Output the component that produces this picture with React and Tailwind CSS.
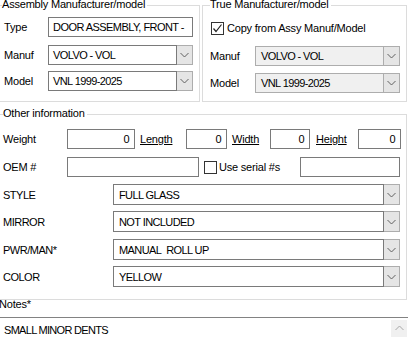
import React from "react";

function Chevron({ up = false, color = "#606060" }) {
  return (
    <svg width="9" height="6" viewBox="0 0 9 6" className="block">
      {up ? (
        <path d="M0.5 5 L4.5 1 L8.5 5" fill="none" stroke={color} strokeWidth="1" />
      ) : (
        <path d="M0.5 1 L4.5 5 L8.5 1" fill="none" stroke={color} strokeWidth="1" />
      )}
    </svg>
  );
}

function Combo({ value, w, h = "h-[20px]", disabled = false, pl = "pl-[4px]" }) {
  return (
    <div className={`flex ${w} ${h}`}>
      <div
        className={`flex-1 flex items-center ${pl} border ${
          disabled ? "border-[#adadad] bg-[#f0f0f0]" : "border-[#7a7a7a] bg-white"
        } whitespace-nowrap overflow-hidden tracking-[-0.6px]`}
      >
        {value}
      </div>
      <div className="w-[16px] flex items-center justify-center border border-l-0 border-[#adadad] bg-[#e5e5e5]">
        <Chevron />
      </div>
    </div>
  );
}

function TextBox({ value = "", w, right = false }) {
  return (
    <div
      className={`${w} h-[20px] flex items-center border border-[#7a7a7a] bg-white whitespace-nowrap overflow-hidden tracking-[-0.55px] ${
        right ? "justify-end pr-[5px]" : "pl-[4px]"
      }`}
    >
      {value}
    </div>
  );
}

function CheckBox({ checked }) {
  return (
    <div className="w-[13px] h-[13px] border border-[#333333] bg-white flex items-center justify-center shrink-0">
      {checked && (
        <svg width="11" height="11" viewBox="0 0 11 11" className="block">
          <path d="M1.5 5.5 L4 8.5 L9.5 1.5" fill="none" stroke="#222" strokeWidth="1.2" />
        </svg>
      )}
    </div>
  );
}

export default function App() {
  return (
    <div className="w-[408px] h-[337px] overflow-hidden bg-white text-[11px] leading-[14px] tracking-[-0.2px] text-black font-['Liberation_Sans',Arial,sans-serif] flex flex-col">
      {/* top row */}
      <div className="flex pt-[5px]">
        {/* Assembly group */}
        <div className="-ml-px w-[201px] h-[97px] border border-[#dcdcdc] flex flex-col">
          <div className="-mt-[9px] ml-[2px] w-fit bg-white pr-[2px]">Assembly Manufacturer/model</div>
          <div className="mt-[6px] flex items-center">
            <div className="w-[48px] pl-[4px]">Type</div>
            <TextBox value="DOOR ASSEMBLY, FRONT -" w="w-[145px]" />
          </div>
          <div className="mt-[8px] flex items-center">
            <div className="w-[48px] pl-[4px]">Manuf</div>
            <Combo value="VOLVO - VOL" w="w-[145px]" />
          </div>
          <div className="mt-[6px] flex items-center">
            <div className="w-[48px] pl-[4px]">Model</div>
            <Combo value="VNL 1999-2025" w="w-[145px]" />
          </div>
        </div>
        {/* True group */}
        <div className="ml-[2px] w-[205px] h-[97px] border border-[#dcdcdc] flex flex-col">
          <div className="-mt-[9px] ml-[7px] w-fit bg-white pr-[2px]">True Manufacturer/model</div>
          <div className="mt-[10px] ml-[8px] flex items-center">
            <CheckBox checked />
            <div className="ml-[3px]">Copy from Assy Manuf/Model</div>
          </div>
          <div className="mt-[11px] flex items-center">
            <div className="w-[52px] pl-[7px]">Manuf</div>
            <Combo value="VOLVO - VOL" w="w-[145px]" disabled pl="pl-[5px]" />
          </div>
          <div className="mt-[7px] flex items-center">
            <div className="w-[52px] pl-[7px]">Model</div>
            <Combo value="VNL 1999-2025" w="w-[145px]" disabled pl="pl-[5px]" />
          </div>
        </div>
      </div>

      {/* Other information */}
      <div className="mt-[12px] -ml-px w-[408px] h-[186px] border border-[#dcdcdc] flex flex-col">
        <div className="-mt-[9px] ml-[3px] w-fit bg-white pr-[2px]">Other information</div>
        <div className="mt-[9px] flex items-center">
          <div className="w-[67px] pl-[3px]">Weight</div>
          <TextBox value="0" w="w-[68px]" right />
          <div className="ml-[5px] w-[46px] underline">Length</div>
          <TextBox value="0" w="w-[41px]" right />
          <div className="ml-[5px] w-[38px] underline">Width</div>
          <TextBox value="0" w="w-[40px]" right />
          <div className="ml-[6px] w-[42px] underline">Height</div>
          <TextBox value="0" w="w-[43px]" right />
        </div>
        <div className="mt-[8px] flex items-center">
          <div className="w-[67px] pl-[3px]">OEM #</div>
          <TextBox w="w-[132px]" />
          <div className="ml-[5px]">
            <CheckBox />
          </div>
          <div className="ml-[2px] w-[81px]">Use serial #s</div>
          <TextBox w="w-[100px]" />
        </div>
        <div className="mt-[7px] flex items-center">
          <div className="w-[113px] pl-[3px] tracking-[-0.5px]">STYLE</div>
          <Combo value="FULL GLASS" w="w-[287px]" h="h-[21px]" pl="pl-[5px]" />
        </div>
        <div className="mt-[6px] flex items-center">
          <div className="w-[113px] pl-[3px] tracking-[-0.5px]">MIRROR</div>
          <Combo value="NOT INCLUDED" w="w-[287px]" h="h-[21px]" pl="pl-[5px]" />
        </div>
        <div className="mt-[7px] flex items-center">
          <div className="w-[113px] pl-[3px] tracking-[-0.5px]">PWR/MAN*</div>
          <Combo value={"MANUAL\u00a0\u00a0ROLL UP"} w="w-[287px]" h="h-[21px]" pl="pl-[5px]" />
        </div>
        <div className="mt-[6px] flex items-center">
          <div className="w-[113px] pl-[3px] tracking-[-0.5px]">COLOR</div>
          <Combo value="YELLOW" w="w-[287px]" h="h-[21px]" pl="pl-[5px]" />
        </div>
      </div>

      {/* Notes */}
      <div className="-mt-[3px] -ml-px">Notes*</div>
      <div className="mt-[6px] -ml-px w-[410px] flex-1 border-t border-[#828282] flex">
        <div className="flex-1 pl-[5px] pt-[5px] tracking-[-0.7px]">SMALL MINOR DENTS</div>
        <div className="w-[16px] mr-[2px] mt-[2px] bg-[#f0f0f0] flex justify-center pt-[5px]">
          <Chevron up color="#a6a6a6" />
        </div>
      </div>
    </div>
  );
}
